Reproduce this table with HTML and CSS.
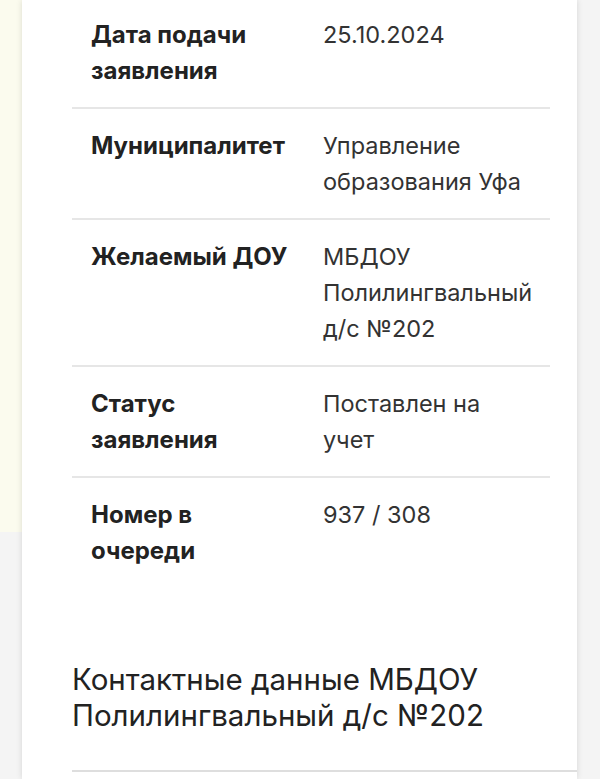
FILE: index.html
```html
<!DOCTYPE html>
<html lang="ru">
<head>
<meta charset="utf-8">
<title>Заявление</title>
<link rel="stylesheet" href="styles.css">
</head>
<body>
<div class="page">
  <div class="glow"></div>
  <main class="card">
    <dl class="info">
      <div class="row first">
        <dt class="label">Дата подачи заявления</dt>
        <dd class="value">25.10.2024</dd>
      </div>
      <div class="row">
        <dt class="label">Муниципалитет</dt>
        <dd class="value">Управление образования Уфа</dd>
      </div>
      <div class="row">
        <dt class="label">Желаемый ДОУ</dt>
        <dd class="value">МБДОУ Полилингвальный д/с №202</dd>
      </div>
      <div class="row">
        <dt class="label">Статус заявления</dt>
        <dd class="value">Поставлен на учет</dd>
      </div>
      <div class="row last">
        <dt class="label">Номер в очереди</dt>
        <dd class="value">937 / 308</dd>
      </div>
    </dl>
    <h2 class="contacts-title">Контактные данные МБДОУ Полилингвальный д/с №202</h2>
    <div class="contacts-list"></div>
  </main>
</div>
</body>
</html>
```
FILE: styles.css
```css
html, body {
  margin: 0;
  padding: 0;
}
body {
  background: #f4f4f4;
  font-family: Inter, "Noto Sans", sans-serif;
  color: #222;
  overflow: hidden;
}
.page {
  position: relative;
  padding: 0 23px 0 22px;
  min-height: 779px;
}
.glow {
  position: absolute;
  left: 0;
  top: 0;
  width: 200px;
  height: 532px;
  background: #fbfbee;
  border-bottom-right-radius: 120px 60px;
}
.card {
  position: relative;
  background: #fff;
  box-shadow: 0 0 6px rgba(0, 0, 0, 0.13);
  padding: 0 27px 0 50px;
  min-height: 779px;
  box-sizing: border-box;
}
.info {
  margin: 0;
}
.row {
  display: grid;
  grid-template-columns: 200px 210px;
  column-gap: 32px;
  padding: 19px 0 18px 19px;
  border-bottom: 2px solid #e6e6e6;
  font-size: 24px;
  line-height: 36px;
}
.row.first {
  padding-top: 17px;
}
.row.last {
  border-bottom: none;
}
.label {
  margin: 0;
  font-weight: 700;
  color: #222;
}
.value {
  margin: 0;
  font-size: 23.5px;
  font-weight: 400;
  color: #333;
}
.contacts-title {
  margin: 74px 0 0;
  font-size: 29.5px;
  line-height: 36px;
  font-weight: 400;
  color: #222;
}
.contacts-list {
  margin: 37px -27px 0 0;
  border-top: 2px solid #dedede;
}
```
